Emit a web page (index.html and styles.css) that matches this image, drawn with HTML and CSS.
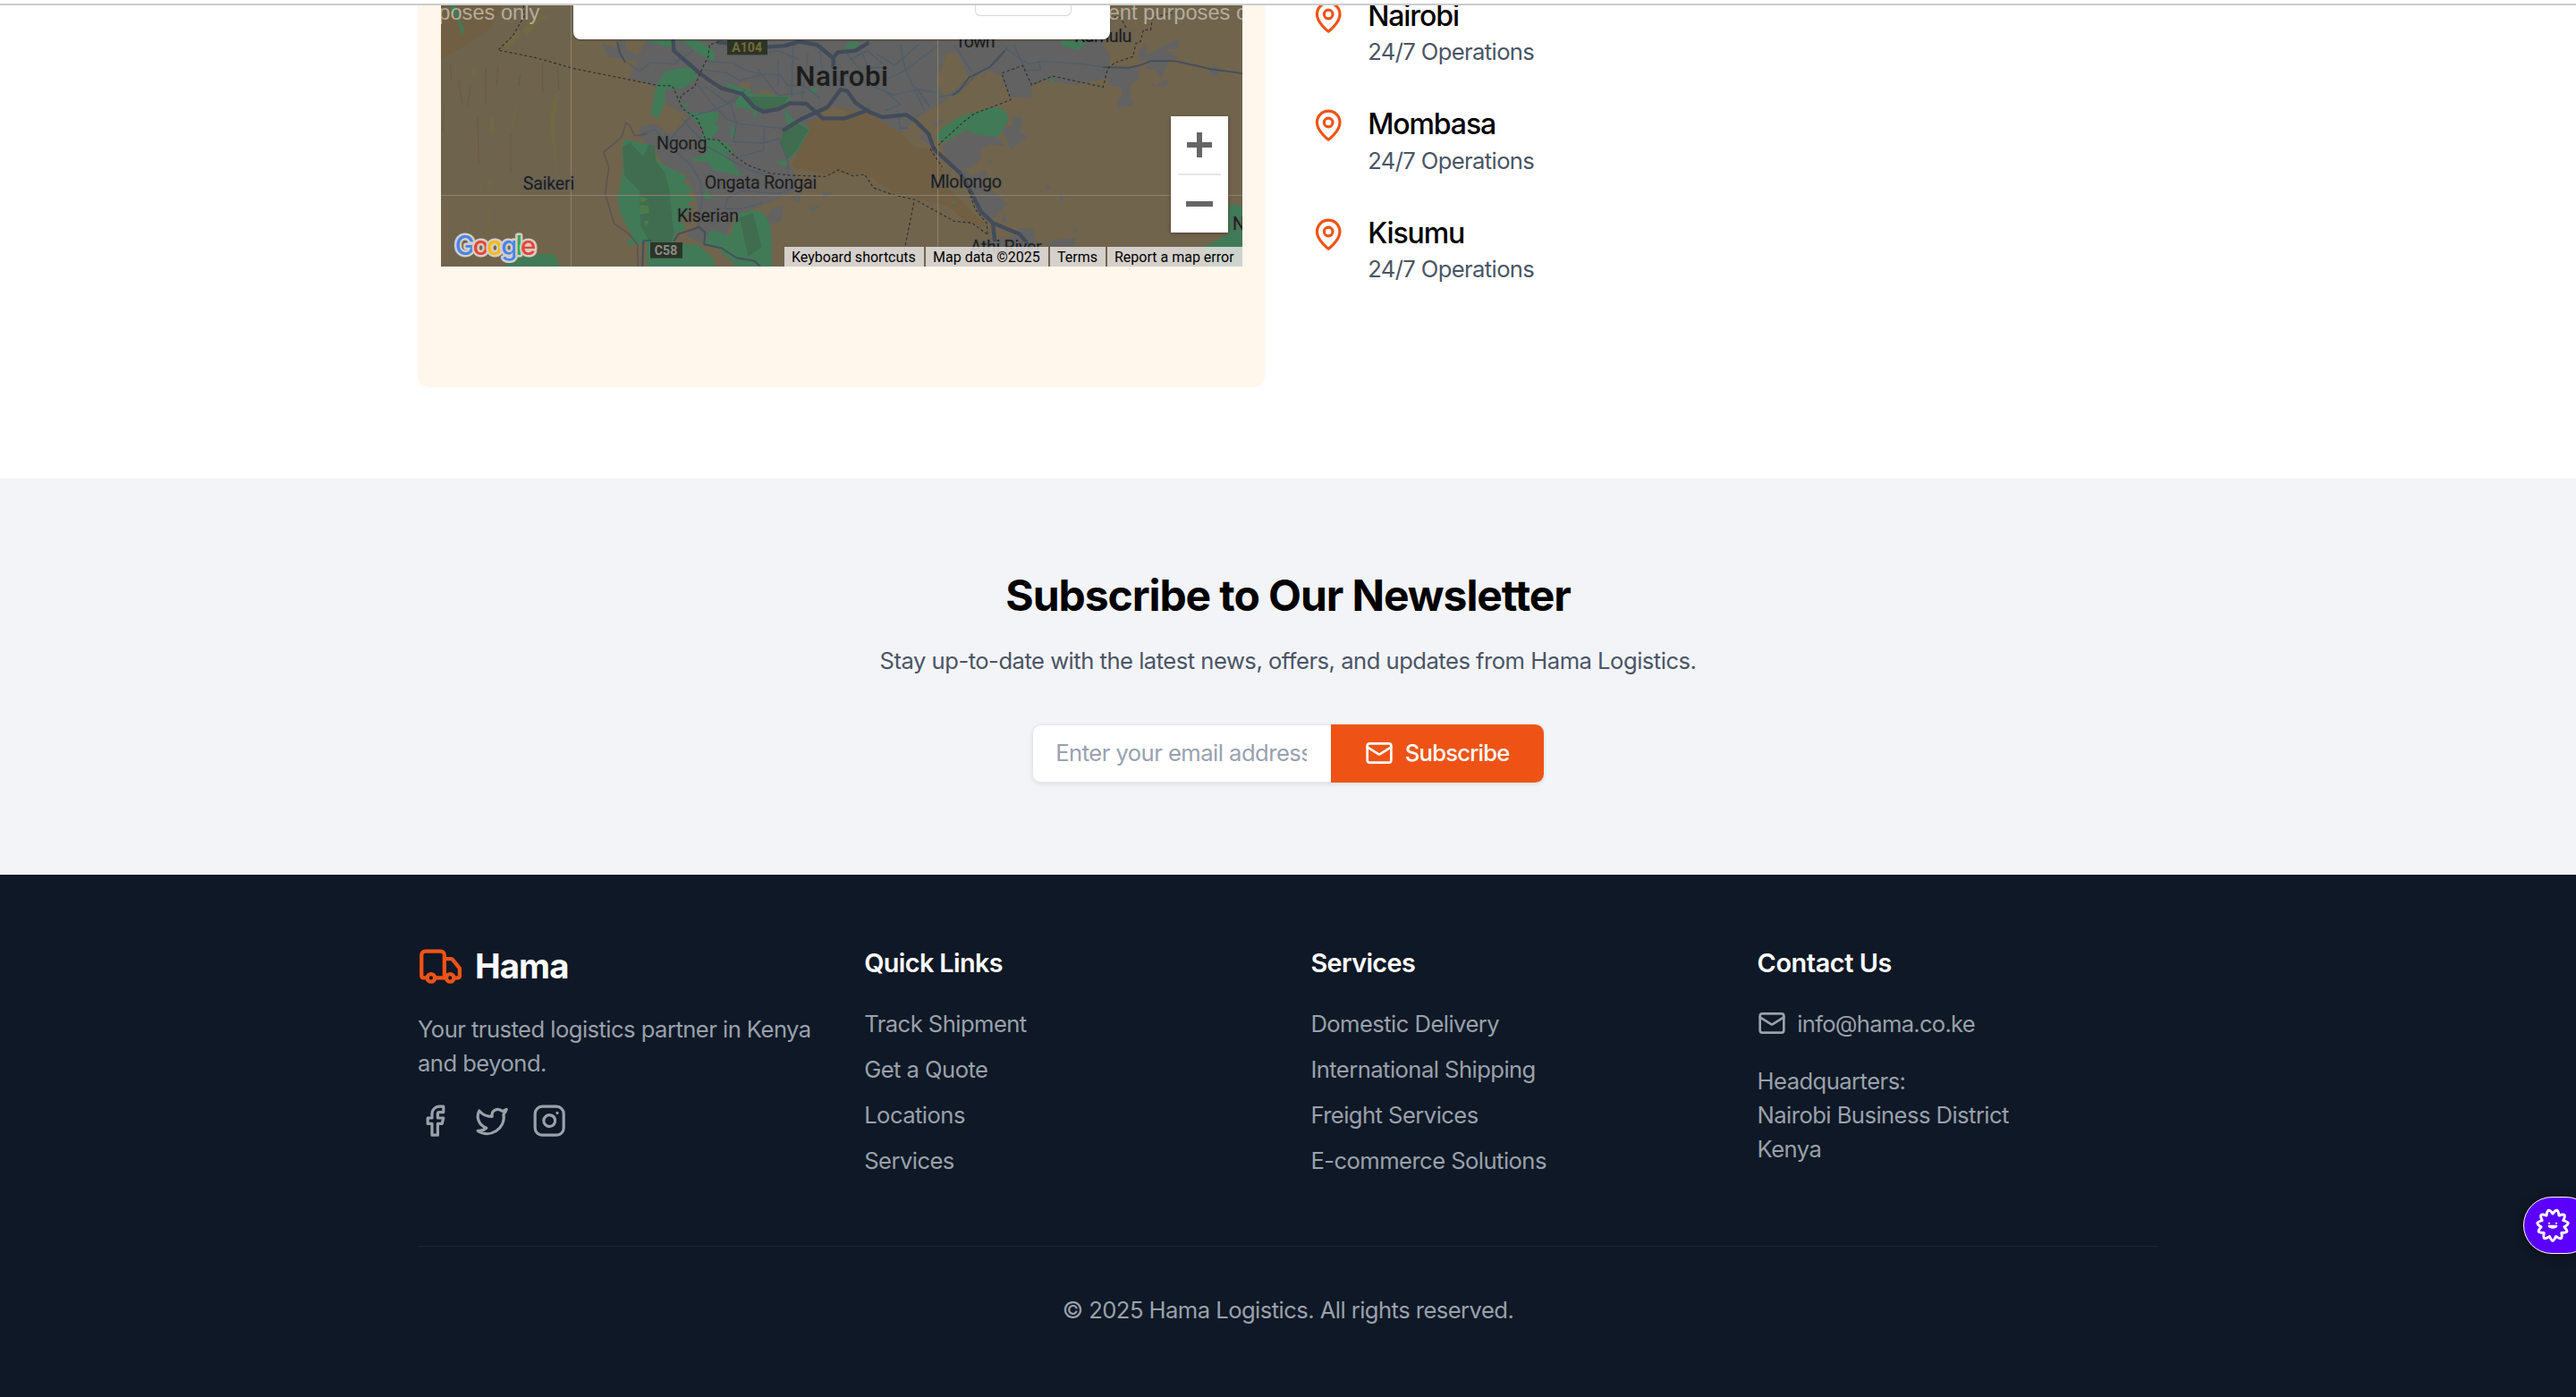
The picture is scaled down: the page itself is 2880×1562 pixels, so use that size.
FILE: index.html
```
<!DOCTYPE html>
<html lang="en">
<head>
<meta charset="utf-8">
<title>Hama Logistics</title>
<link rel="stylesheet" href="styles.css">
</head>
<body>
<svg class="sprite" aria-hidden="true">
  <symbol id="pin" viewBox="0 0 24 24"><path d="M20 10c0 6-8 12-8 12s-8-6-8-12a8 8 0 0 1 16 0Z"/><circle cx="12" cy="10" r="3"/></symbol>
  <symbol id="mail" viewBox="0 0 24 24"><rect x="2" y="4" width="20" height="16" rx="2"/><path d="m22 7-8.97 5.7a1.94 1.94 0 0 1-2.06 0L2 7"/></symbol>
</svg>
<div class="topbar"></div>

<main class="locations">
  <div class="map-card">
    <div class="map">
      <svg class="map-canvas" viewBox="99 0 2688 894" preserveAspectRatio="none">
        <rect class="land" x="99" width="2688" height="894"/>
        <path class="park" d="M99 0H315L270 90 190 150 99 198Z"/>
        <path class="land-b" d="M99 198 190 150 300 70 535 18V655H99Z"/>
        <path class="park" d="M1272 560 1300 500 1336 430 1310 398 1375 375 1440 352 1535 378 1640 448 1690 495 1740 500 1785 580 1790 620 1860 690 1930 760 1860 745 1800 690 1620 650 1520 580 1400 585Z"/>

        <!-- built-up areas -->
        <g class="urban">
          <path d="M640 145 690 165V135H2310L2345 190 2335 260 2240 285 2120 270 2080 290 2080 330 2008 325 1980 255 1925 230 1870 262 1815 322 1770 352 1690 400 1645 448 1535 380 1440 360 1330 410 1300 500 1262 545 1285 585 1295 640 1220 670 1110 715 1085 715 1050 800 1010 770 980 820 920 790 960 755 955 665 920 585 850 560 815 500 765 460 765 425 815 415 870 450 935 395 858 350 850 300 730 262 760 205 660 190Z"/>
          <path d="M1210 700 1248 690 1240 740 1170 762ZM1270 665 1310 640 1300 678ZM1330 700 1370 690 1350 712ZM1378 645 1408 645 1380 670Z"/>
          <g transform="translate(1440 0)">
            <path d="M340 490 425 435 460 455 520 455 555 490 500 485 468 500 470 530 435 565 400 560 440 590 490 570 480 620 520 650 558 685 510 738 470 700 430 620 370 560Z"/>
            <path d="M540 430 580 420 570 390 610 395 605 430 595 440 628 460 570 500ZM258 455 290 450 300 490ZM310 410 345 400 325 430ZM500 540 515 535 505 545ZM685 635 695 610 707 635ZM732 648 752 658 740 680ZM545 710 557 745 540 745ZM780 760 797 775 780 780Z"/>
            <path d="M880 225 1000 225 1000 265 970 285 970 325 982 352 930 362 928 335 945 320 940 295 900 285ZM1000 170 1025 148 1022 185 1065 165 1138 130 1130 165 1085 165 1135 195 1100 200 1090 230 1075 262 1050 235 1020 230 1040 205 1000 200ZM1045 272 1053 290 1045 290ZM1062 285 1095 265 1097 285 1070 293ZM1235 250 1250 215 1270 240 1260 257Z"/>
            <path d="M465 830 500 800 560 800 600 765 645 765 655 830ZM695 810 750 800 790 800 780 825 700 825ZM470 262 490 235 480 262Z"/>
          </g>
        </g>

        <!-- undeveloped pockets inside the city -->
        <g class="land">
          <path d="M720 135H790L760 185 720 165ZM835 375 925 390 865 450 830 425 820 390ZM1100 278H1145L1130 300 1105 298ZM1150 315 1190 300 1220 318 1200 325Z"/>
          <path d="M1760 270 1795 180 1830 175 1870 262 1790 330Z"/>
          <path d="M1370 385 1410 355 1465 375 1440 395 1375 398Z"/>
        </g>

        <!-- parks and forests -->
        <g class="green">
          <path d="M125 18H150L160 60 175 95 170 125 155 70ZM775 135H900L865 160 800 140ZM905 135H960L1010 165 1020 210 990 195 960 175Z"/>
          <path d="M820 290 850 240 940 222 960 262 915 295 852 300 850 345 825 400 803 380ZM875 300 900 345 935 350 920 362ZM915 368 945 378 1030 375 1030 405 1012 408 1035 430 1005 465 1060 480 1085 522 1050 510 1110 592 1010 570 1000 545 935 538 990 515 970 465 985 440Z"/>
          <path d="M1045 276 1135 300 1140 315 1268 322 1270 342 1240 362 1160 368 1155 410 1145 370 1085 360 1095 318ZM1248 360 1275 395 1336 432 1300 500 1262 540 1235 480 1260 420ZM1072 418 1090 440 1070 468ZM1450 165 1480 145 1500 160ZM1335 300 1365 290 1350 318ZM1222 540 1262 540 1252 560Z"/>
          <path d="M708 480 720 468 800 485 830 545 890 575 925 595 910 612 945 635 925 655 955 668 920 685 945 695 905 735 920 765 880 790 885 815 965 822 1015 870V894H790V815L720 822 740 790 700 715 692 665 710 570Z"/>
          <path d="M985 635 1015 668 980 665ZM1090 720 1140 705 1180 712 1205 760 1210 894H1090L1030 835 985 820 1000 770 1070 790ZM310 894 360 855 480 852 497 894Z"/>
          <g transform="translate(1440 0)">
            <path d="M318 465 340 430 400 390 520 358 550 370 563 400 530 458 450 452 420 435 345 480ZM736 135H830L800 168 745 155ZM697 262 712 265 715 288ZM10 165 30 142 70 140 35 168ZM1300 690 1320 685 1330 692 1347 688V894H1230L1215 830 1300 785ZM375 675H384V684H375Z"/>
          </g>
        </g>
        <g class="forest">
          <path d="M708 490 735 480 778 525 795 485 815 490 820 540 850 580 865 640 880 780 870 815 800 812 770 760 765 640 715 590Z"/>
          <path d="M1110 325 1265 325 1240 360 1180 375 1140 360ZM1250 430 1290 410 1332 435 1290 505 1262 535 1237 480ZM1100 730 1145 715 1175 828 1130 860Z"/>
        </g>
        <g class="olive">
          <path d="M300 190 320 135 360 102 368 120 320 160ZM372 100 400 70 480 40 430 75 385 122ZM198 252 212 228 220 258ZM335 405 370 312 350 375 342 432ZM265 392 272 395 278 475 266 435ZM490 310 480 430 486 590 465 420 475 345ZM260 690 265 700 260 785 254 740ZM320 680 323 715 318 750ZM234 620 238 620 235 660ZM262 600 270 605 262 655Z"/>
          <path class="grass" d="M765 658 795 668 770 680ZM768 688 795 690 797 715 768 720ZM780 740 798 740 785 762Z"/>
        </g>
        <path class="ridge" d="M130 212 134 270M158 270 170 350M198 285 188 360M250 230 248 345M290 225 285 290M365 250 360 290M440 212 440 310M490 225 495 300M110 345 105 440M222 395 226 550M333 450 333 580"/>

        <!-- local roads -->
        <g class="road-s">
          <path d="M725 210 765 240 800 210 880 215 945 170M985 205 1080 212 1120 235 1180 250H1235L1260 285 1320 290 1370 330M985 235 1060 245 1100 270 1180 250M1100 160 1180 180 1230 170 1300 200M1160 230 1230 320 1320 310M960 285 1010 350 1060 400 1100 415 1250 432M985 290 1060 345 1100 310M770 450 815 435 865 485 910 530 935 550 970 610 975 665 960 760M865 470 935 390 1010 370 1080 340 1120 300M1070 350 1090 410 1080 475 1180 480 1235 465M1185 430 1180 505 1100 525M905 395 990 490 1130 570 1180 585M1050 700 1060 665 1110 640 1230 650 1290 625M1050 700 1110 700 1180 680M1232 465 1265 545 1262 590"/>
          <path d="M1230 200 1230 290M1280 150 1275 320M1330 180 1310 330M1370 170 1380 260M1420 200 1440 300M1460 180 1500 230 1580 225M1470 200 1530 170 1600 230M1450 250 1550 290 1620 320M1510 170 1540 250M1640 150 1655 230 1720 370M1560 180 1620 220 1700 150M1580 270 1650 240 1770 150M1610 320 1700 300 1760 310M1580 300 1640 350 1590 370M1690 290 1740 360M1820 150 1880 240M1630 370 1640 430 1665 430"/>
          <path d="M1990 160 2045 200 2070 215 2120 205 2250 215 2320 225M2020 150 2060 235 2110 235 2105 205M1770 325 1830 315 1890 255 1960 210 2000 160"/>
        </g>
        <path class="road-m" d="M1815 320 1840 300 1870 260 1940 225 1990 170M2320 225 2405 227 2440 220 2480 205 2560 205 2640 222 2680 232 2787 246M690 140 700 180 718 210M775 894 778 808 805 806M880 810 895 785 965 762 985 780 982 820 1040 832 1090 865 1150 875 1170 894"/>
        <path class="track" d="M760 894 758 820 730 785 680 750 650 650 662 560 645 510 705 460 720 412 732 420 748 455 790 450"/>

        <!-- highways -->
        <g class="road-l">
          <path d="M878 135 880 170 960 240 1000 270 1040 296 1110 315 1150 360 1180 375 1230 366 1270 346 1325 348 1380 397H1455L1530 370"/>
          <path d="M1250 435 1310 398 1395 360 1440 300 1462 305 1490 345 1535 375 1580 393 1660 385 1690 405 1735 450 1752 500 1840 580 1880 650 1910 710 1950 748 2040 785 2075 828M1950 748 1956 805M1195 157 1250 154 1300 140 1360 150 1415 195 1430 175 1490 170 1530 145M1415 195V225M1030 142 1060 145"/>
        </g>

        <!-- county boundaries -->
        <path class="border" d="M376 18 378 55 340 120 290 168 410 192 545 230 830 287 875 288 910 365 960 400 985 465 1030 470 1080 520 1130 555 1200 580 1270 588 1390 592 1432 570 1480 590 1520 585 1550 630 1620 655 1690 670 1820 742 1880 748 1930 785M1030 140 1000 150 995 190 975 230 950 290 905 320 900 340M1685 680 1655 830 1650 894M1740 500 1780 560M1752 500 1850 410 1890 380 2010 335 1980 245 2050 220 2080 285 2150 255 2320 292 2335 230 2360 210 2420 190 2430 145 2445 140 2455 100 2480 100 2485 60 2560 40M2340 55 2380 60 2400 100M1870 640 1890 700 1930 750 1932 785"/>

        <path class="tile" d="M535.5 0V894M1765.5 0V894M99 655.500H2787"/>

        <g class="shield"><rect x="1059" y="135" width="135" height="49"/><rect x="801" y="813" width="108" height="53"/></g>
        <text class="shield-a" x="1075" y="174" textLength="101">A104</text>
        <text class="shield-c" x="815" y="855" textLength="77">C58</text>

        <g class="place">
          <text x="374" y="635" textLength="173">Saikeri</text>
          <text x="822" y="502" textLength="170">Ngong</text>
          <text x="983" y="633" textLength="377">Ongata Rongai</text>
          <text x="891" y="743" textLength="207">Kiserian</text>
          <text x="1740" y="629" textLength="240">Mlolongo</text>
          <text x="1824" y="159" textLength="134">Town</text>
          <text x="2223" y="140" textLength="193">Kamulu</text>
          <text x="1874" y="849" textLength="240">Athi River</text>
          <text x="2754" y="770">N</text>
          <text class="city" x="1288" y="288" textLength="311">Nairobi</text>
        </g>
        <g class="notice">
          <text x="430" y="67" text-anchor="end">For development purposes only</text>
          <text x="1902" y="67">For development purposes only</text>
        </g>
        <text class="google" x="146" y="856" textLength="272"><tspan fill="#4285f4">G</tspan><tspan fill="#ea4335">o</tspan><tspan fill="#fbbc04">o</tspan><tspan fill="#4285f4">g</tspan><tspan fill="#34a853">l</tspan><tspan fill="#ea4335">e</tspan></text>
      </svg>
      <div class="map-dialog"><div class="dialog-ok"></div></div>
      <div class="zoom">
        <svg viewBox="0 0 64 65"><path d="M18 32H46M32 18V46"/></svg>
        <i></i>
        <svg viewBox="0 0 64 65"><path d="M17 33H47"/></svg>
      </div>
      <div class="credits"><span>Keyboard shortcuts</span><span>Map data ©2025</span><span>Terms</span><span>Report a map error</span></div>
    </div>
  </div>
  <ul class="cities">
    <li><svg class="icon"><use href="#pin"/></svg><div><h3>Nairobi</h3><p>24/7 Operations</p></div></li>
    <li><svg class="icon"><use href="#pin"/></svg><div><h3>Mombasa</h3><p>24/7 Operations</p></div></li>
    <li><svg class="icon"><use href="#pin"/></svg><div><h3>Kisumu</h3><p>24/7 Operations</p></div></li>
  </ul>
</main>

<section class="newsletter">
  <h2>Subscribe to Our Newsletter</h2>
  <p>Stay up-to-date with the latest news, offers, and updates from Hama Logistics.</p>
  <form>
    <input type="email" placeholder="Enter your email address">
    <button type="button"><svg class="icon"><use href="#mail"/></svg>Subscribe</button>
  </form>
</section>

<footer>
  <div class="columns">
    <div>
      <div class="brand">
        <svg class="icon" viewBox="0 0 24 24"><path d="M14 18V6a2 2 0 0 0-2-2H4a2 2 0 0 0-2 2v11a1 1 0 0 0 1 1h2M15 18H9M19 18h2a1 1 0 0 0 1-1v-3.650a1 1 0 0 0-.22-.624l-3.480-4.350A1 1 0 0 0 17.520 8H14"/><circle cx="17" cy="18" r="2"/><circle cx="7" cy="18" r="2"/></svg>
        <span>Hama</span>
      </div>
      <p class="tagline">Your trusted logistics partner in Kenya<br>and beyond.</p>
      <div class="social">
        <svg class="icon" viewBox="0 0 24 24"><path d="M18 2h-3a5 5 0 0 0-5 5v3H7v4h3v8h4v-8h3l1-4h-4V7a1 1 0 0 1 1-1h3z"/></svg>
        <svg class="icon" viewBox="0 0 24 24"><path d="M22 4s-.7 2.100-2 3.400c1.600 10-9.400 17.300-18 11.600 2.200.1 4.400-.6 6-2C3 15.500.5 9.600 3 5c2.200 2.600 5.600 4.100 9 4-.9-4.200 4-6.600 7-3.800 1.100 0 3-1.200 3-1.200z"/></svg>
        <svg class="icon" viewBox="0 0 24 24"><rect x="2" y="2" width="20" height="20" rx="5"/><path d="M16 11.370A4 4 0 1 1 12.630 8 4 4 0 0 1 16 11.370zM17.500 6.500h.01"/></svg>
      </div>
    </div>
    <div>
      <h4>Quick Links</h4>
      <ul><li>Track Shipment</li><li>Get a Quote</li><li>Locations</li><li>Services</li></ul>
    </div>
    <div>
      <h4>Services</h4>
      <ul><li>Domestic Delivery</li><li>International Shipping</li><li>Freight Services</li><li>E-commerce Solutions</li></ul>
    </div>
    <div>
      <h4 class="contact">Contact Us</h4>
      <p class="email"><svg class="icon"><use href="#mail"/></svg><span>info@hama.co.ke</span></p>
      <p>Headquarters:<br>Nairobi Business District<br>Kenya</p>
    </div>
  </div>
  <p class="copyright">© 2025 Hama Logistics. All rights reserved.</p>
</footer>

<div class="widget">
  <svg viewBox="-57 -57 114 114"><path class="burst" d="M0 52Q4 52 10.700 37.400 24 46 28.100 43.700 32 41 29.500 25.500 45 25 47.300 21.600 49 17 38.600 5.500 51-2 51.500-7.400 51-12 35.500-16.200 42-30 39.300-34.100 36-38 21.100-32.800 19-48 14.600-49.900 9-51 0-39-9-51-14.600-49.900-19-48-21.100-32.800-36-38-39.300-34.100-42-30-35.500-16.200-51-12-51.500-7.400-51-2-38.600 5.500-49 17-47.300 21.600-45 25-29.500 25.500-32 41-28.100 43.700-24 46-10.700 37.400-4 52 0 52Z"/><path class="face" d="M-12-7h.1M12-7h.1M-13 2Q-11 8 0 8T13 2Z"/></svg>
</div>
</body>
</html>
```
FILE: styles.css
```
* { box-sizing: border-box; margin: 0; padding: 0; }
body {
  width: 2880px; height: 1562px; overflow: hidden; position: relative;
  background: #fff; color: #000;
  font: 400 25.6px/38.4px Inter, "Liberation Sans", sans-serif;
  letter-spacing: -0.55px;
}
ul { list-style: none; }
.sprite { position: absolute; width: 0; height: 0; }
.icon { display: block; flex: none; fill: none; stroke: currentColor; stroke-width: 2; stroke-linecap: round; stroke-linejoin: round; }
.topbar { position: absolute; z-index: 5; inset: 0 0 auto; height: 6px; background: #fff; border-bottom: 2px solid #ccc; }

.locations { display: flex; gap: 52px; height: 535px; padding-left: 467px; }
.map-card { width: 947px; height: 432.5px; padding: 0 25px 0 26px; background: #fff6ec; border-radius: 0 0 12.8px 12.8px; }
.map { position: relative; width: 896px; height: 298px; overflow: hidden; }
.map-canvas { display: block; width: 896px; height: 298px; }
.land { fill: #70644d; }
.land-b { fill: #6e644e; }
.park { fill: #705f43; }
.urban { fill: #626262; }
.green { fill: #417a57; }
.forest { fill: #406c50; }
.olive { fill: #716844; }
.grass { fill: #4c7a4b; }
.ridge { fill: none; stroke: #6a5b47; stroke-width: 4; }
.road-s { fill: none; stroke: #505d69; stroke-width: 4; }
.road-m { fill: none; stroke: #474f5b; stroke-width: 6; }
.track { fill: none; stroke: #5c5550; stroke-width: 5; }
.road-l { fill: none; stroke: #424b5a; stroke-width: 13; stroke-linejoin: round; stroke-linecap: round; }
.border { fill: none; stroke: #302f2c; stroke-width: 3.5; stroke-dasharray: 9 8; }
.tile { fill: none; stroke: #8b816f; stroke-width: 3; }
.shield { fill: #2c3428; }
.shield-a, .shield-c { font: 700 42px Roboto, sans-serif; letter-spacing: 0; fill: #766b35; }
.shield-c { fill: #8c8f88; }
.place { font: 400 59px Roboto, sans-serif; letter-spacing: 0; fill: #1c1c1c; stroke: #5d5d5d; stroke-opacity: .55; stroke-width: 8; paint-order: stroke; }
.city { font-size: 94px; font-weight: 500; }
.notice { font: 400 71px "Liberation Sans", sans-serif; letter-spacing: 0; fill: #b5ac9c; }
.google { font: 500 88px Inter, sans-serif; letter-spacing: 0; stroke: #d3cdc4; stroke-width: 15; stroke-linejoin: round; paint-order: stroke; }
.map-dialog { position: absolute; left: 148px; top: 0; width: 600px; height: 44.3px; background: #fff; border-radius: 0 0 8px 8px; box-shadow: 0 1px 2px #0005; }
.dialog-ok { width: 108px; height: 18px; margin-left: 449px; border: 1px solid #d8d8d8; border-top: 0; border-radius: 0 0 6px 6px; }
.zoom { position: absolute; left: 816px; top: 130px; width: 64px; height: 130px; background: #fff; box-shadow: 0 1px 4px #0005; }
.zoom svg { display: block; width: 64px; height: 65px; fill: none; stroke: #666; stroke-width: 6; }
.zoom i { position: absolute; left: 8px; top: 64px; width: 48px; height: 2px; background: #e6e6e6; }
.credits { position: absolute; right: 0; bottom: 0; display: flex; gap: 2px; height: 22px; font: 16px/22px Roboto, sans-serif; letter-spacing: 0; }
.credits span { padding: 1px 0 0 8px; width: 156px; background: #e6e3e2d9; white-space: nowrap; }
.credits span:nth-child(2) { width: 137px; }
.credits span:nth-child(3) { width: 62px; }
.credits span:nth-child(4) { width: 151px; }

.cities { display: flex; flex-direction: column; gap: 38.4px; margin-top: -5.6px; }
.cities li { display: flex; gap: 24.8px; height: 83.2px; }
.cities .icon { width: 38.4px; height: 38.4px; margin-top: 5.4px; color: #f05316; }
.cities h3 { padding-top: 1.2px; font-size: 32px; line-height: 44.8px; font-weight: 500; letter-spacing: -1.1px; }
.cities p { margin-top: -1.2px; color: #4a5565; letter-spacing: -0.62px; }

.newsletter { height: 443px; padding-top: 101.8px; background: #f3f4f8; text-align: center; }
.newsletter h2 { font-size: 48px; line-height: 57.6px; font-weight: 700; letter-spacing: -1.08px; margin-bottom: 25.6px; }
.newsletter p { color: #4a5565; letter-spacing: -0.5px; }
.newsletter form { display: flex; justify-content: center; width: 571.6px; height: 65.6px; margin: 51.2px auto 0; border-radius: 9.6px; box-shadow: 0 1.6px 4px #00000018; }
.newsletter input { width: 333.4px; padding: 0 26.6px 0 25px; border: 1px solid #e5e7eb; border-right: 0; border-radius: 9.6px 0 0 9.6px; background: #fff; font: inherit; letter-spacing: -0.53px; outline: 0; }
.newsletter input::placeholder { color: #99a1af; opacity: 1; }
.newsletter button { display: flex; align-items: center; gap: 12.8px; width: 238.2px; padding-left: 38.4px; border: 0; border-radius: 0 9.6px 9.6px 0; background: #ee5315; color: #fff; font: inherit; font-weight: 500; letter-spacing: -0.79px; }
.newsletter .icon, .email .icon { width: 32px; height: 32px; }

footer { height: 584px; padding: 76.8px 467px; background: #0f1826; color: #99a1ab; }
.columns { display: grid; grid-template-columns: repeat(4, 448px); gap: 51.2px; height: 339.2px; border-bottom: 1px solid #1a2935; }
.brand { display: flex; gap: 12.8px; height: 51.2px; color: #fff; font-size: 38.4px; line-height: 51.2px; font-weight: 700; letter-spacing: -0.95px; }
.brand .icon { width: 51.2px; height: 51.2px; color: #f05316; }
.tagline { margin-top: 25.8px; letter-spacing: -0.54px; white-space: nowrap; }
.social { display: flex; gap: 25.6px; margin-top: 25px; }
.social .icon { width: 38.4px; height: 38.4px; }
h4 { color: #fff; font-size: 28.8px; line-height: 44.8px; font-weight: 600; letter-spacing: -0.62px; margin-bottom: 26px; }
h4.contact { letter-spacing: -0.4px; }
.columns li { margin-bottom: 12.8px; }
.email { display: flex; align-items: center; gap: 12.8px; margin-bottom: 25.6px; }
.email span { letter-spacing: -0.72px; }
.email .icon { margin-top: -1px; }
.copyright { margin-top: 52px; text-align: center; }

.widget { position: absolute; left: 2821px; top: 1338px; width: 80px; height: 64px; border: 1px solid #fff; border-radius: 32px; background: #5b00ff; box-shadow: 0 2px 12px #0006; }
.widget svg { display: block; width: 38px; height: 38px; margin: 12px 0 0 13px; fill: none; stroke: #fff; stroke-linecap: round; stroke-linejoin: round; }
.burst { stroke-width: 9; }
.face { stroke-width: 6; }
```
